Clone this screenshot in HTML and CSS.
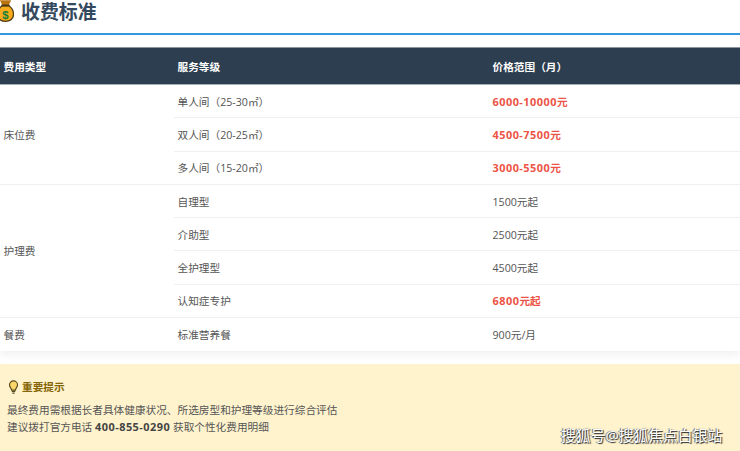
FILE: index.html
```html
<!DOCTYPE html>
<html lang="zh">
<head>
<meta charset="utf-8">
<title>收费标准</title>
<link rel="stylesheet" href="styles.css">
</head>
<body>
<div class="page">
  <h2 class="title">
    <svg class="bag" viewBox="0 0 18 24" width="17" height="23" aria-hidden="true">
      <path d="M3 0h12l-2.500 5h-7z" fill="#b8740f"/>
      <path d="M5.500 6h7c3 2 5 5.500 5 9 0 4.500-3.500 7.500-8.500 7.500S.5 19.500.5 15c0-3.500 2-7 5-9z" fill="#f5ab1c" stroke="#4f3a12" stroke-width="1.300"/>
      <rect x="4.500" y="4.500" width="9" height="2" rx="1" fill="#4f3a12"/>
      <text x="9" y="19.500" class="bag-sign">$</text>
    </svg>
    <span>收费标准</span>
  </h2>
  <table class="fees">
    <thead>
      <tr><th class="c1">费用类型</th><th class="c2">服务等级</th><th>价格范围（月）</th></tr>
    </thead>
    <tbody>
      <tr><td rowspan="3" class="group">床位费</td><td>单人间（25-30㎡）</td><td class="price"><span class="num">6000-10000</span>元</td></tr>
      <tr><td>双人间（20-25㎡）</td><td class="price"><span class="num">4500-7500</span>元</td></tr>
      <tr class="end"><td>多人间（15-20㎡）</td><td class="price"><span class="num">3000-5500</span>元</td></tr>
      <tr><td rowspan="4" class="group">护理费</td><td>自理型</td><td>1500元起</td></tr>
      <tr><td>介助型</td><td>2500元起</td></tr>
      <tr><td>全护理型</td><td>4500元起</td></tr>
      <tr class="end"><td>认知症专护</td><td class="price"><span class="num">6800</span>元起</td></tr>
      <tr class="last"><td class="group">餐费</td><td>标准营养餐</td><td>900元/月</td></tr>
    </tbody>
  </table>
  <section class="notice">
    <h3 class="notice-title">
      <svg viewBox="0 0 12 16" width="11" height="14" aria-hidden="true">
        <path d="M6 1a4.600 4.600 0 0 0-4.600 4.600c0 2.400 2.100 3.600 2.400 5.900h4.400c.3-2.300 2.400-3.500 2.400-5.900A4.600 4.600 0 0 0 6 1z" fill="#fbd66a" stroke="#5a4a1c" stroke-width="1.300"/>
        <path d="M4 13h4M4.700 15h2.600" stroke="#5a4a1c" stroke-width="1.300" fill="none"/>
      </svg>
      <span>重要提示</span>
    </h3>
    <p>最终费用需根据长者具体健康状况、所选房型和护理等级进行综合评估</p>
    <p>建议拨打官方电话 <strong class="num">400-855-0290</strong> 获取个性化费用明细</p>
  </section>
  <div class="mark">搜狐号@搜狐焦点白银站</div>
</div>
</body>
</html>
```
FILE: styles.css
```css
html, body {
  margin: 0;
  padding: 0;
  background: #fff;
}
.page {
  position: relative;
  width: 740px;
  height: 451px;
  overflow: hidden;
  font-family: "Open Sans", "Noto Sans CJK SC", sans-serif;
  font-size: 10.670px;
  color: #555;
}
.title {
  display: flex;
  align-items: center;
  gap: 7px;
  height: 35px;
  margin: 0 0 12px 0;
  padding: 1px 0 9px;
  box-sizing: border-box;
  border-bottom: 2px solid #3498db;
  font-size: 18.900px;
  line-height: 23px;
  font-weight: 700;
  color: #34495e;
}
.bag {
  margin-left: -3px;
  margin-top: -3px;
  flex: none;
}
.bag-sign {
  font-family: "Liberation Sans", sans-serif;
  font-size: 12px;
  font-weight: 700;
  fill: #12803a;
  text-anchor: middle;
}
.fees {
  width: 100%;
  border-collapse: collapse;
  table-layout: fixed;
  box-shadow: 0 4px 8px rgba(0, 0, 0, 0.06);
}
.fees th {
  height: 37px;
  padding: 0 0 0 3.500px;
  background: #2c3e50;
  color: #fff;
  font-weight: 700;
  text-align: left;
  border-top: 1px solid #8c96a0;
  border-bottom: 1px solid #a4acb4;
  box-sizing: border-box;
}
.c1 { width: 174px; }
.c2 { width: 315px; }
.fees td {
  height: 33.300px;
  padding: 0 0 0 3.500px;
  box-sizing: border-box;
  border-bottom: 1px solid #f0f0f0;
}
.fees .last td { border-bottom: 0; }
.price {
  color: #ec5446;
  font-weight: 700;
}
.num {
  font-size: 10.900px;
  letter-spacing: 0.490px;
  line-height: 1;
}
.notice {
  margin-top: 13px;
  height: 87px;
  padding: 14px 7px 0;
  box-sizing: border-box;
  background: #fff3cd;
  color: #555;
}
.notice-title {
  display: flex;
  align-items: center;
  gap: 3px;
  margin: 0 0 6px 1px;
  font-size: 10.670px;
  line-height: 18px;
  font-weight: 700;
  color: #856404;
}
.notice p {
  margin: 0;
  line-height: 17px;
}
.notice strong {
  color: #444;
}
.mark {
  position: absolute;
  left: 561px;
  top: 425px;
  font-size: 14.800px;
  line-height: 20px;
  color: #fff;
  text-shadow: 1px 1px 1px #222, -1px 0 1px #555;
}
```
